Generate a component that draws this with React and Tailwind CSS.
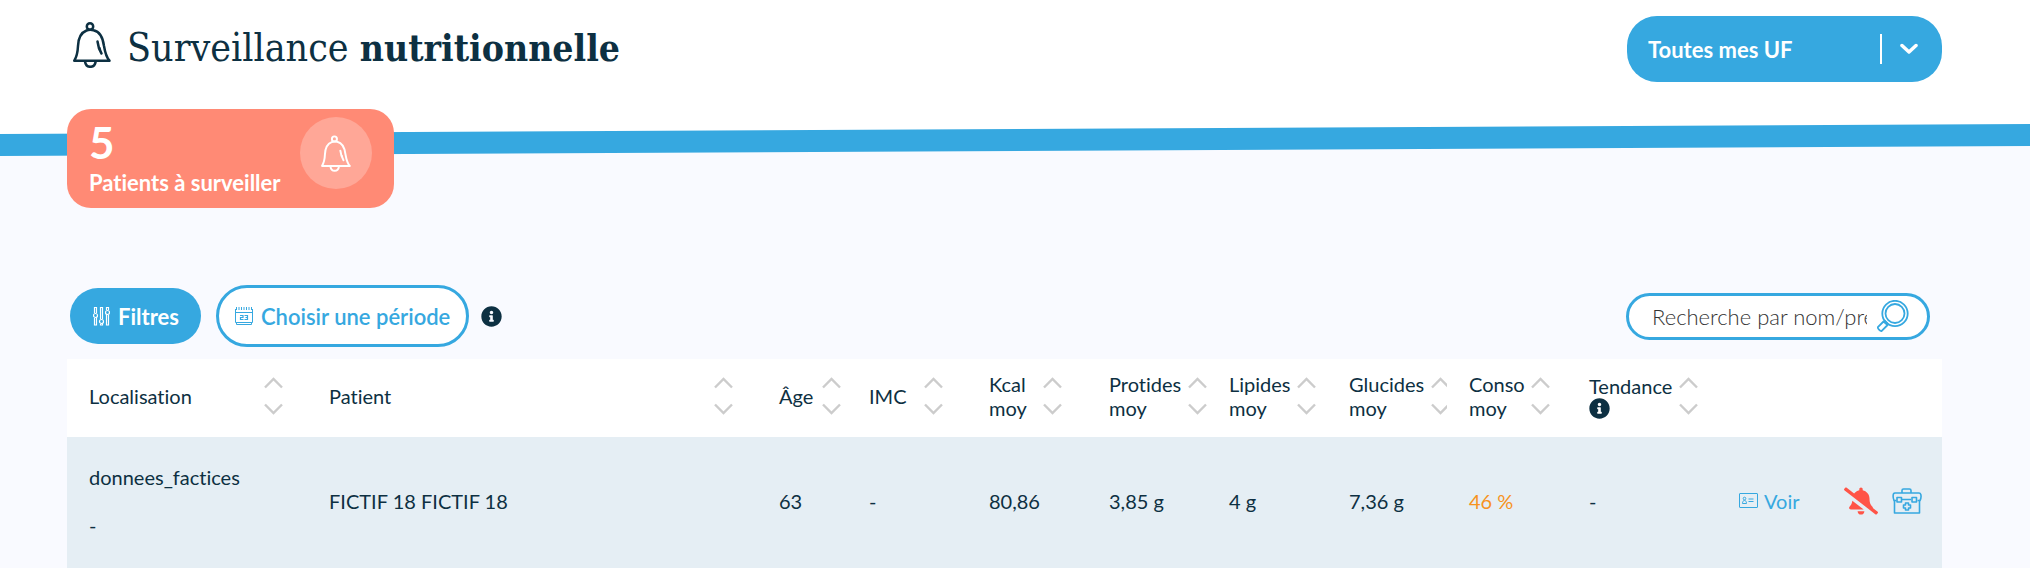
import { FaBellSlash, FaInfoCircle } from "react-icons/fa";

const columns = [
  { key: "localisation", label: "Localisation", col: "w-[240px]", text: "w-[175px]" },
  { key: "patient", label: "Patient", col: "w-[450px]", text: "w-[385px]" },
  { key: "age", label: "Âge", col: "w-[90px]", text: "w-[43px]" },
  { key: "imc", label: "IMC", col: "w-[120px]", text: "w-[55px]" },
  { key: "kcal", label: "Kcal moy", col: "w-[120px]", text: "w-[54px]" },
  { key: "protides", label: "Protides moy", col: "w-[120px]", text: "w-[79px]" },
  { key: "lipides", label: "Lipides moy", col: "w-[120px]", text: "w-[68px]" },
  { key: "glucides", label: "Glucides moy", col: "w-[120px]", text: "w-[82px]" },
  { key: "conso", label: "Conso moy", col: "w-[120px]", text: "w-[62px]" },
  { key: "tendance", label: "Tendance", col: "w-[150px]", text: "w-[90px]", info: true },
];

const patients = [
  {
    id: 18,
    localisation: "donnees_factices",
    chambre: "-",
    patient: "FICTIF 18 FICTIF 18",
    age: "63",
    imc: "-",
    kcal: "80,86",
    protides: "3,85 g",
    lipides: "4 g",
    glucides: "7,36 g",
    conso: "46 %",
    tendance: "-",
  },
];

function BellIcon({ className }) {
  return (
    <svg viewBox="0 0 38 46" className={className} fill="none" stroke="currentColor" strokeWidth="2.5" strokeLinecap="round" strokeLinejoin="round" aria-hidden="true">
      <circle cx="17" cy="4.5" r="3.2" />
      <path d="M13.5 8.500C7 11 5.300 17 5 24c-.3 7-1.500 11-3.700 14.700h35.200C33 35 32 30 31 24 30 16 26.500 9.500 20.500 8.200c-2.500-.6-5-.5-7 .3Z" />
      <path d="M12 39.500c.5 3.500 2.500 5.300 5.300 5.300s4.900-1.800 5.400-5.300" />
      <path d="M24.500 19.500c.6 5 1.800 8.500 4 12M26.500 26l.8 3" />
    </svg>
  );
}

function SlidersIcon({ className }) {
  return (
    <svg viewBox="0 0 17 20" className={className} fill="none" stroke="currentColor" strokeWidth="1.2" aria-hidden="true">
      <path d="M1.500 7V1.500h2V7M1.500 12v7h2v-7M7.500 13V1.500h2V13M7.500 18v1h2v-1M13.500 4V1.500h2V4M13.500 9v10h2V9" />
      <circle cx="2.500" cy="9.500" r="2" />
      <circle cx="8.500" cy="15.500" r="2" />
      <circle cx="14.500" cy="6.500" r="2" />
    </svg>
  );
}

function CalendarIcon({ className }) {
  return (
    <svg viewBox="0 0 18 18" className={className} fill="none" stroke="currentColor" aria-hidden="true">
      <path d="M.5 2v13.500h17V2M.5 5.500h17M1.500 15.500v2h15v-2" />
      <path d="M1 1.500h16" strokeDasharray="1 1.500" strokeWidth="3" />
      <path d="M5 8.500h3v2H5.500v2H8.500M9.500 8.500h3v4h-3M10.500 10.500h2" strokeWidth="1.200" />
    </svg>
  );
}

function SearchIcon({ className }) {
  return (
    <svg viewBox="0 0 32 32" className={className} fill="none" stroke="currentColor" strokeWidth="1.800" strokeLinejoin="round" aria-hidden="true">
      <circle cx="18" cy="13.500" r="12.700" />
      <circle cx="18" cy="13.500" r="9.500" />
      <path d="M6.500 21.500.9 27.200c-.5 1 2.300 4 3.600 3.900L10.600 25zM7.500 20.500l3.700 3.700" />
    </svg>
  );
}

function CardIcon({ className }) {
  return (
    <svg viewBox="0 0 19 15" className={className} fill="none" stroke="currentColor" aria-hidden="true">
      <rect x=".5" y=".5" width="18" height="14" rx=".5" />
      <circle cx="5.500" cy="5.500" r="1.300" />
      <path d="M3.500 10.500c0-2 .7-3 2-3s2 1 2 3zM9.500 6h5M9.500 8.500h5" />
    </svg>
  );
}

function MedkitIcon({ className }) {
  return (
    <svg viewBox="0 0 30 26" className={className} fill="none" stroke="currentColor" strokeWidth="1.600" strokeLinejoin="round" aria-hidden="true">
      <path d="M10 5V2.500C10 1.500 10.500 1 11.500 1h6c1 0 1.500.5 1.500 1.500V5" />
      <path d="M4.500 12.500H2C1 10 .8 8 1.500 5.800 1.800 5.200 2.300 5 3 5h24c1 0 1.500.5 1.800 1.500.5 2 .3 4-.8 6h-2.500" />
      <path d="M2.500 12.500V25h25V12.500M10 11.500h9" />
      <rect x="5" y="9.500" width="4.500" height="4.500" />
      <rect x="20" y="9.500" width="4.500" height="4.500" />
      <path d="M13.500 15h3v2h2v3h-2v2h-3v-2h-2v-3h2z" />
    </svg>
  );
}

function SortButton({ label }) {
  return (
    <button type="button" aria-label={`Trier par ${label}`} className="shrink-0 text-[#cccccc]">
      <svg viewBox="0 0 19 38" className="h-[38px] w-[19px]" fill="none" stroke="currentColor" strokeWidth="2.400" aria-hidden="true">
        <path d="M1 10.500 9.500 2 18 10.500M1 27.500 9.500 36 18 27.500" />
      </svg>
    </button>
  );
}

function Header() {
  return (
    <header className="bg-[#36a8e0] [clip-path:polygon(0_0,100%_0,100%_146px,0_156px)]">
      <div className="flex h-[156px] items-start justify-between bg-white pr-[88px] pl-[73px] pt-4 [clip-path:polygon(0_0,100%_0,100%_124px,0_134px)]">
        <h1 className="flex items-start gap-4 pt-[6px] font-['DejaVu_Serif_Condensed','DejaVu_Serif',serif] text-[39px] leading-[52px]">
          <BellIcon className="h-[46px] w-[38px]" />
          <span>
            Surveillance <strong className="text-[37px] font-bold">nutritionnelle</strong>
          </span>
        </h1>
        <div className="relative">
          <select
            aria-label="Unité fonctionnelle"
            className="h-[66px] w-[315px] appearance-none rounded-[30px] bg-[#36a8e0] px-[21px] text-[22px] font-bold text-white"
          >
            <option>Toutes mes UF</option>
          </select>
          <div className="pointer-events-none absolute inset-y-0 right-6 flex items-center gap-[18px] text-white">
            <span className="h-[30px] w-[2px] bg-white" />
            <svg viewBox="0 0 18 12" className="h-3 w-[18px]" fill="none" stroke="currentColor" strokeWidth="3.500" strokeLinecap="round" strokeLinejoin="round" aria-hidden="true">
              <path d="M2 2.500 9 9l7-6.500" />
            </svg>
          </div>
        </div>
      </div>
    </header>
  );
}

function PatientsTable() {
  return (
    <table className="w-full table-fixed bg-white text-left text-[20px] leading-6">
      <thead>
        <tr className="h-[78px]">
          {columns.map((c) => (
            <th key={c.key} scope="col" className={`${c.col} overflow-hidden pb-1 pl-[22px] font-normal`}>
              <div className="flex items-center">
                <span className={`${c.text} shrink-0`}>
                  {c.label}
                  {c.info && <FaInfoCircle className="size-[21px]" />}
                </span>
                <SortButton label={c.label} />
              </div>
            </th>
          ))}
          <th scope="col" aria-label="Actions" />
        </tr>
      </thead>
      <tbody>
        {patients.map((p) => (
          <tr key={p.id} className="h-[131px] bg-[#e5eef4] *:pb-1 *:pl-[22px]">
            <td>
              <p className="mb-6">{p.localisation}</p>
              <p>{p.chambre}</p>
            </td>
            <td>{p.patient}</td>
            <td>{p.age}</td>
            <td>{p.imc}</td>
            <td>{p.kcal}</td>
            <td>{p.protides}</td>
            <td>{p.lipides}</td>
            <td>{p.glucides}</td>
            <td className="text-[#f7931e]">{p.conso}</td>
            <td>{p.tendance}</td>
            <td className="pr-5">
              <div className="flex items-center text-[#36a8e0]">
                <a href="#voir" className="flex items-center gap-[6px]">
                  <CardIcon className="h-[15px] w-[19px]" />
                  Voir
                </a>
                <button type="button" aria-label="Désactiver la surveillance" className="ml-auto text-[#ff5447]">
                  <FaBellSlash className="h-[28px] w-[34px]" />
                </button>
                <button type="button" aria-label="Soins" className="ml-[14px]">
                  <MedkitIcon className="h-[26px] w-[30px]" />
                </button>
              </div>
            </td>
          </tr>
        ))}
      </tbody>
    </table>
  );
}

export default function App() {
  return (
    <div className="min-h-screen bg-[#f9faff] font-[Lato,sans-serif] text-[#0d3042] [font-variant-ligatures:none]">
      <Header />
      <main className="pr-[88px] pl-[67px]">
        <section className="relative -mt-[47px] flex h-[99px] w-[327px] justify-between rounded-[24px] bg-[#ff8a75] pt-2 pr-[22px] pl-[22px] text-white">
          <div>
            <p className="text-[44px] leading-[50px] font-bold">5</p>
            <p className="text-[22px] leading-[32px] font-bold whitespace-nowrap">Patients à surveiller</p>
          </div>
          <div className="flex size-[72px] shrink-0 items-center justify-center rounded-full bg-[#ffa797]">
            <BellIcon className="h-[37px] w-[30px]" />
          </div>
        </section>

        <div className="mt-[77px] flex items-center pr-3 pl-[3px]">
          <button type="button" className="flex h-14 items-center gap-2 rounded-full bg-[#36a8e0] pr-[22px] pl-[23px] text-[22px] font-bold text-white">
            <SlidersIcon className="h-5 w-[17px]" />
            Filtres
          </button>
          <button type="button" className="ml-[15px] flex h-[62px] items-center gap-2 rounded-full border-[3px] border-[#36a8e0] bg-white px-4 text-[22px] font-semibold text-[#36a8e0]">
            <CalendarIcon className="size-[18px]" />
            Choisir une période
          </button>
          <FaInfoCircle className="ml-3 size-[21px]" />
          <label className="ml-auto flex h-[47px] w-[304px] items-center rounded-full border-[3px] border-[#36a8e0] bg-white pr-[18px] pl-[23px] text-[#36a8e0]">
            <input
              type="text"
              aria-label="Recherche"
              placeholder="Recherche par nom/prénom"
              className="mr-[10px] w-full min-w-0 text-[22px] font-light text-[#0d3042] outline-none placeholder:text-[#333333]"
            />
            <SearchIcon className="size-8 shrink-0" />
          </label>
        </div>

        <div className="mt-3">
          <PatientsTable />
        </div>
      </main>
    </div>
  );
}
